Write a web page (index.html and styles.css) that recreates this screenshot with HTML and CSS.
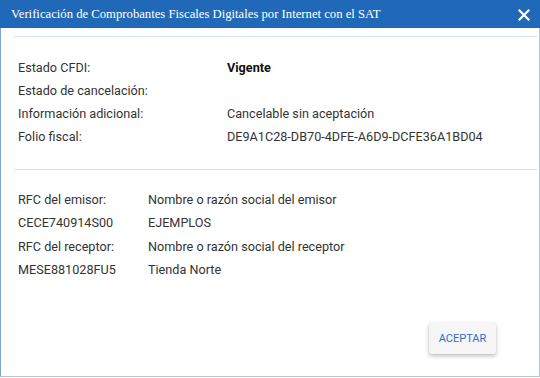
FILE: index.html
```html
<!DOCTYPE html>
<html lang="es">
<head>
<meta charset="utf-8">
<title>Verificación CFDI</title>
<link rel="stylesheet" href="styles.css">
</head>
<body>
<div class="dialog">
  <div class="titlebar">
    <span class="title">Verificación de Comprobantes Fiscales Digitales por Internet con el SAT</span>
    <svg class="close" width="12" height="12" viewBox="0 0 12 12"><path d="M1.5 1.5 L10.5 10.5 M10.5 1.5 L1.5 10.5" stroke="#fff" stroke-width="2.2" stroke-linecap="square"/></svg>
  </div>
  <div class="content">
    <div class="section first">
      <div class="grid grid-a">
        <span>Estado CFDI:</span><span class="bold">Vigente</span>
        <span>Estado de cancelación:</span><span></span>
        <span>Información adicional:</span><span>Cancelable sin aceptación</span>
        <span>Folio fiscal:</span><span>DE9A1C28-DB70-4DFE-A6D9-DCFE36A1BD04</span>
      </div>
    </div>
    <div class="section second">
      <div class="grid grid-b">
        <span>RFC del emisor:</span><span>Nombre o razón social del emisor</span>
        <span>CECE740914S00</span><span>EJEMPLOS</span>
        <span>RFC del receptor:</span><span>Nombre o razón social del receptor</span>
        <span>MESE881028FU5</span><span>Tienda Norte</span>
      </div>
    </div>
    <div class="actions">
      <button class="btn">ACEPTAR</button>
    </div>
  </div>
</div>
</body>
</html>
```
FILE: styles.css
```css
html, body {
  margin: 0;
  padding: 0;
  background: #ffffff;
}
.dialog {
  width: 538px;
  height: 376px;
  border: 1px solid #b7c6d6;
  border-left-color: #7ea3d3;
  border-top: none;
  display: flex;
  flex-direction: column;
  background: #fff;
}
.titlebar {
  height: 28px;
  background: #1f69b8;
  display: flex;
  align-items: center;
  justify-content: space-between;
  padding: 0 10px 0 11px;
  margin-left: -1px;
  margin-right: -1px;
}
.title {
  font-family: "Liberation Serif", "Times New Roman", serif;
  font-size: 12.7px;
  color: #ffffff;
}
.close {
  display: block;
  margin-top: 1px;
}
.content {
  flex: 1;
  display: flex;
  flex-direction: column;
  padding: 0 2px 0 13px;
}
.section {
  border-top: 1px solid #d5e2ee;
}
.section.first {
  margin-top: 8px;
  padding: 19px 0 21px 4px;
}
.section.second {
  padding: 18px 0 0 4px;
}
.grid {
  display: grid;
  font-family: Roboto, "Liberation Sans", sans-serif;
  font-size: 12.65px;
  color: #333333;
  line-height: 23px;
}
.grid-a {
  grid-template-columns: 209px 1fr;
}
.grid-b {
  grid-template-columns: 130px 1fr;
  line-height: 23.3px;
}
.bold {
  font-weight: 700;
  color: #111;
}
.actions {
  margin-top: auto;
  display: flex;
  justify-content: flex-end;
  padding: 0 41px 22px 0;
}
.btn {
  width: 67px;
  height: 31px;
  border: none;
  border-radius: 2px;
  background: #f6f6f6;
  box-shadow: 0 2px 4px rgba(0,0,0,0.25), 0 0 1px rgba(0,0,0,0.15);
  font-family: Roboto, "Liberation Sans", sans-serif;
  font-size: 11px;
  color: #2f6fc4;
  padding: 0;
}
```
